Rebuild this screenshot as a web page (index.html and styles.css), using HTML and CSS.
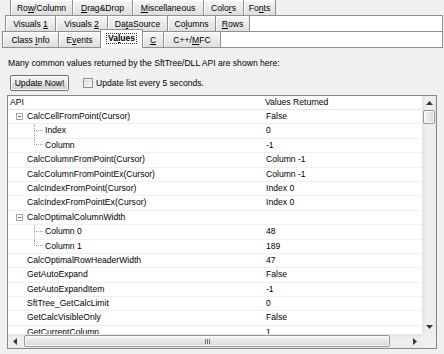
FILE: index.html
```html
<!DOCTYPE html>
<html>
<head>
<meta charset="utf-8">
<link rel="stylesheet" href="styles.css">
</head>
<body>
<div class="tabs">
  <div class="tabrow r1">
    <div class="tab w62"><span>Ro<u>w</u>/Column</span></div>
    <div class="tab w60"><span><u>D</u>rag&amp;Drop</span></div>
    <div class="tab w71"><span><u>M</u>iscellaneous</span></div>
    <div class="tab w40"><span>Colo<u>r</u>s</span></div>
    <div class="tab w32 last"><span>Fo<u>n</u>ts</span></div>
  </div>
  <div class="tabrow r2">
    <div class="tab w50"><span>Visuals <u>1</u></span></div>
    <div class="tab w52"><span>Visuals <u>2</u></span></div>
    <div class="tab w60"><span>Da<u>t</u>aSource</span></div>
    <div class="tab w48"><span>Co<u>l</u>umns</span></div>
    <div class="tab w34"><span><u>R</u>ows</span></div>
    <div class="fill"></div>
  </div>
  <div class="tabrow r3">
    <div class="tab w56"><span>Class <u>I</u>nfo</span></div>
    <div class="tab w42"><span>E<u>v</u>ents</span></div>
    <div class="tab w43 sel"><span class="focus">Va<u>l</u>ues</span></div>
    <div class="tab w20"><span><u>C</u></span></div>
    <div class="tab w57"><span>C++/<u>M</u>FC</span></div>
    <div class="fill"></div>
  </div>
</div>

<div class="panel">
  <p class="intro">Many common values returned by the SftTree/DLL API are shown here:</p>
  <div class="controls">
    <button class="btn">Update Now!</button>
    <label class="check"><span class="cb"></span><span>Update list every 5 seconds.</span></label>
  </div>

  <div class="list">
    <div class="main">
      <div class="head">
        <div class="api">API</div>
        <div class="val">Values Returned</div>
      </div>
      <div class="row parent"><div class="api"><span class="box"><span class="minus"></span></span><span>CalcCellFromPoint(Cursor)</span></div><div class="val">False</div></div>
      <div class="row child"><div class="api"><span class="branch"><span class="up"></span><span class="down"></span></span><span>Index</span></div><div class="val">0</div></div>
      <div class="row child last"><div class="api"><span class="branch"><span class="up"></span><span class="down"></span></span><span>Column</span></div><div class="val">-1</div></div>
      <div class="row top"><div class="api">CalcColumnFromPoint(Cursor)</div><div class="val">Column -1</div></div>
      <div class="row top"><div class="api">CalcColumnFromPointEx(Cursor)</div><div class="val">Column -1</div></div>
      <div class="row top"><div class="api">CalcIndexFromPoint(Cursor)</div><div class="val">Index 0</div></div>
      <div class="row top"><div class="api">CalcIndexFromPointEx(Cursor)</div><div class="val">Index 0</div></div>
      <div class="row parent"><div class="api"><span class="box"><span class="minus"></span></span><span>CalcOptimalColumnWidth</span></div><div class="val"></div></div>
      <div class="row child"><div class="api"><span class="branch"><span class="up"></span><span class="down"></span></span><span>Column 0</span></div><div class="val">48</div></div>
      <div class="row child last"><div class="api"><span class="branch"><span class="up"></span><span class="down"></span></span><span>Column 1</span></div><div class="val">189</div></div>
      <div class="row top"><div class="api">CalcOptimalRowHeaderWidth</div><div class="val">47</div></div>
      <div class="row top"><div class="api">GetAutoExpand</div><div class="val">False</div></div>
      <div class="row top"><div class="api">GetAutoExpandItem</div><div class="val">-1</div></div>
      <div class="row top"><div class="api">SftTree_GetCalcLimit</div><div class="val">0</div></div>
      <div class="row top"><div class="api">GetCalcVisibleOnly</div><div class="val">False</div></div>
      <div class="row top"><div class="api">GetCurrentColumn</div><div class="val">1</div></div>
    </div>
    <div class="vscroll">
      <div class="arrow"><svg width="7" height="4" viewBox="0 0 7 4"><path d="M0 4L3.5 0L7 4Z" fill="#3a3a3a"/></svg></div>
      <div class="vthumb"></div>
      <div class="track"></div>
      <div class="arrow"><svg width="7" height="4" viewBox="0 0 7 4"><path d="M0 0L3.5 4L7 0Z" fill="#3a3a3a"/></svg></div>
    </div>
    <div class="hscroll">
      <div class="arrow"><svg width="4" height="7" viewBox="0 0 4 7"><path d="M4 0L0 3.5L4 7Z" fill="#3a3a3a"/></svg></div>
      <div class="hthumb"><span class="grip"><i></i><i></i><i></i></span></div>
      <div class="track"></div>
      <div class="arrow"><svg width="4" height="7" viewBox="0 0 4 7"><path d="M0 0L4 3.5L0 7Z" fill="#3a3a3a"/></svg></div>
    </div>
    <div class="corner"></div>
  </div>
</div>
</body>
</html>
```
FILE: styles.css
```css
* { box-sizing: border-box; }
body {
  margin: 0;
  width: 444px;
  height: 354px;
  overflow: hidden;
  background: #f0f0f0;
  font-family: "Liberation Sans", Arial, sans-serif;
  font-size: 8.6px;
  color: #000;
}
u { text-decoration: underline; text-underline-offset: 1px; }

/* ---- tabs ---- */
.tabs { width: 443px; height: 48px; }
.tabrow { display: flex; }
.r1 { height: 15px; padding-left: 10px; }
.r2 { height: 16px; padding-left: 5px; }
.r3 { height: 17px; padding-left: 2px; }

.tab {
  flex: none;
  display: flex;
  align-items: center;
  justify-content: center;
  white-space: nowrap;
  border-left: 1px solid #8e9096;
  background: linear-gradient(#f6f6f6, #ececec 45%, #dedede);
  box-shadow: inset 1px 1px 0 #ffffff;
}
.r1 .tab { padding-top: 1px; }
.r2 .tab { border-top: 1px solid #8e9096; }
.r3 .tab { border-top: 1px solid #8e9096; border-bottom: 1px solid #8e9096; }
.tab.last { border-right: 1px solid #8e9096; }

.fill {
  flex: 1;
  background: #fff;
  border: 1px solid #8e9096;
  border-bottom: none;
}
.r3 .fill { border-bottom: 1px solid #8e9096; }

.tab.sel {
  margin-top: -2px;
  height: 19px;
  background: #fff;
  box-shadow: none;
  border-top: 1px solid #8e9096;
  border-bottom: none;
  border-right: 1px solid #8e9096;
  font-weight: bold;
  padding-bottom: 1px;
}
.tab.sel + .tab { border-left: none; }
.focus {
  outline: 1px dotted #333;
  outline-offset: 0;
  padding: 0 1px;
  line-height: 9px;
}

.w20 { width: 20px; }
.w32 { width: 33px; }
.w34 { width: 34px; }
.w40 { width: 40px; }
.w42 { width: 42px; }
.w43 { width: 43px; }
.w48 { width: 48px; }
.w50 { width: 50px; }
.w52 { width: 52px; }
.w56 { width: 56px; }
.w57 { width: 57px; }
.w60 { width: 60px; }
.w62 { width: 62px; }
.w71 { width: 71px; }

/* ---- panel ---- */
.panel { padding: 10px 0 0 7px; }
.intro {
  margin: 0 0 0 1px;
  height: 11px;
  line-height: 11px;
  white-space: nowrap;
}
.controls {
  margin-top: 6px;
  display: flex;
  align-items: center;
  height: 16px;
}
.btn {
  margin: 0 0 0 3px;
  width: 59px;
  height: 16px;
  padding: 0;
  font: inherit;
  color: #000;
  border: 1px solid #707070;
  border-radius: 2px;
  background: linear-gradient(#f4f4f4, #ebebeb 48%, #dddddd 52%, #d1d1d1);
  box-shadow: inset 0 0 0 1px #fbfbfb;
}
.check {
  display: flex;
  align-items: center;
  margin-left: 14px;
  white-space: nowrap;
}
.cb {
  width: 10px;
  height: 10px;
  margin-right: 3px;
  border: 1px solid #8e8f8f;
  background: linear-gradient(135deg, #d8d8d8, #f6f6f6);
  box-shadow: inset 0 0 0 1px #f4f4f4;
}

/* ---- list ---- */
.list {
  margin-top: 4px;
  width: 430px;
  height: 254px;
  border: 1px solid #828790;
  background: #fff;
  display: grid;
  grid-template-columns: 414px 14px;
  grid-template-rows: 238px 14px;
}
.main { overflow: hidden; }
.head, .row {
  display: grid;
  grid-template-columns: 256px 1fr;
  white-space: nowrap;
}
.head {
  height: 14px;
  line-height: 13px;
  border-bottom: 1px solid #e3e6ea;
}
.head .api { padding-left: 2px; }
.head .val { padding-left: 1px; }

.row {
  height: 14.4px;
  line-height: 13.4px;
  border-bottom: 1px solid #f0f0f0;
}
.row .val { padding-left: 2px; }
.row .api { display: flex; align-items: center; height: 100%; }
.row.top .api { padding-left: 19px; }
.row.parent .api { padding-left: 8px; }
.row.child .api { padding-left: 26px; }

.box {
  width: 7px;
  height: 7px;
  margin-right: 4px;
  border: 1px solid #a5a5a5;
  background: #fff;
  display: flex;
  align-items: center;
  justify-content: center;
}
.minus { width: 3px; height: 1px; background: #6a6a6a; }

.branch {
  width: 9px;
  height: 100%;
  margin-right: 2px;
  display: flex;
  flex-direction: column;
}
.branch .up {
  height: 50%;
  border-left: 1px dotted #a0a0a0;
  border-bottom: 1px dotted #a0a0a0;
}
.branch .down {
  flex: 1;
  border-left: 1px dotted #a0a0a0;
}
.row.last .branch .down { border-left: none; }

/* ---- scrollbars ---- */
.vscroll {
  display: flex;
  flex-direction: column;
  background: linear-gradient(90deg, #e4e4e4, #eeeeee 25%, #eeeeee 75%, #e8e8e8);
  border-left: 1px solid #e6e6e6;
}
.vscroll .arrow {
  height: 14px;
  display: flex;
  align-items: center;
  justify-content: center;
}
.vscroll .track { flex: 1; }
.vthumb {
  height: 14px;
  margin: 0 1px 0 0;
  border: 1px solid #979797;
  border-radius: 2px;
  background: linear-gradient(90deg, #f4f4f4, #e6e6e6 50%, #d8d8d8);
  box-shadow: inset 0 0 0 1px #fbfbfb;
}
.hscroll {
  display: flex;
  background: linear-gradient(#e4e4e4, #eeeeee 25%, #eeeeee 75%, #e8e8e8);
  border-top: 1px solid #e6e6e6;
}
.hscroll .arrow {
  width: 14px;
  display: flex;
  align-items: center;
  justify-content: center;
}
.hscroll .track { flex: 1; }
.hthumb {
  width: 366px;
  margin: 0 0 1px 2px;
  border: 1px solid #979797;
  border-radius: 2px;
  background: linear-gradient(#f4f4f4, #e6e6e6 50%, #d8d8d8);
  box-shadow: inset 0 0 0 1px #fbfbfb;
  display: flex;
  align-items: center;
  justify-content: center;
}
.grip { display: flex; gap: 1px; }
.grip i { display: block; width: 1px; height: 5px; background: #6e6e6e; }
.corner { background: #f0f0f0; }
```
